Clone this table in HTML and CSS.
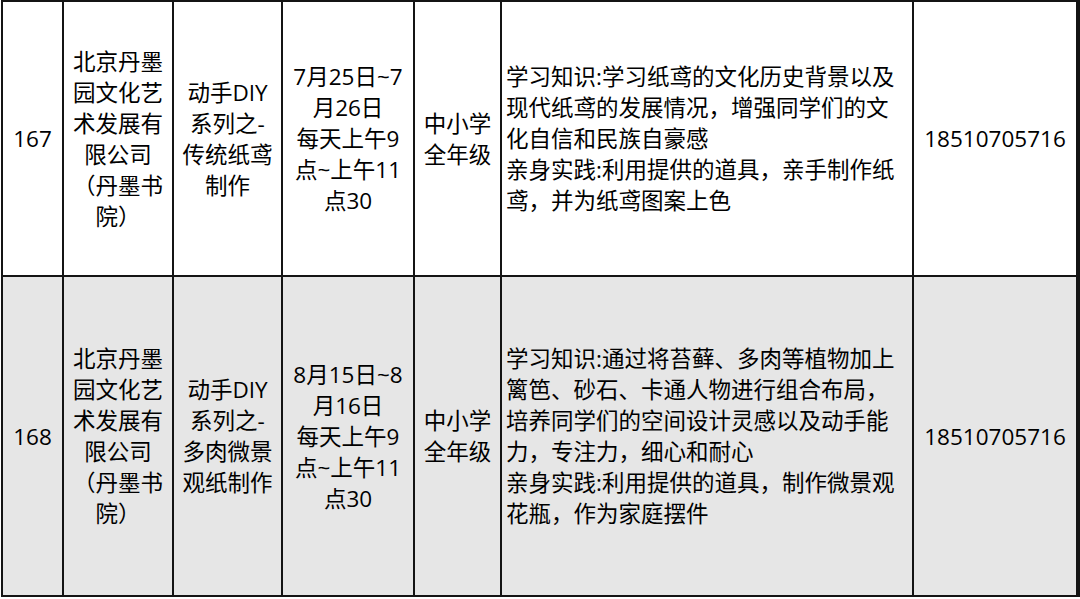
FILE: index.html
```html
<!DOCTYPE html>
<html lang="zh-CN">
<head>
<meta charset="utf-8">
<title>活动列表</title>
<link rel="stylesheet" href="styles.css">
</head>
<body>
<div class="table">
  <div class="row">
    <div class="cell c1">167</div>
    <div class="cell c2">北京丹墨<br>园文化艺<br>术发展有<br>限公司<br>（丹墨书<br>院）</div>
    <div class="cell c3">动手DIY<br>系列之-<br>传统纸鸢<br>制作</div>
    <div class="cell c4">7月25日~7<br>月26日<br>每天上午9<br>点~上午11<br>点30</div>
    <div class="cell c5">中小学<br>全年级</div>
    <div class="cell c6">学习知识:学习纸鸢的文化历史背景以及<br>现代纸鸢的发展情况，增强同学们的文<br>化自信和民族自豪感<br>亲身实践:利用提供的道具，亲手制作纸<br>鸢，并为纸鸢图案上色</div>
    <div class="cell c7">18510705716</div>
  </div>
  <div class="row alt">
    <div class="cell c1">168</div>
    <div class="cell c2">北京丹墨<br>园文化艺<br>术发展有<br>限公司<br>（丹墨书<br>院）</div>
    <div class="cell c3">动手DIY<br>系列之-<br>多肉微景<br>观纸制作</div>
    <div class="cell c4">8月15日~8<br>月16日<br>每天上午9<br>点~上午11<br>点30</div>
    <div class="cell c5">中小学<br>全年级</div>
    <div class="cell c6">学习知识:通过将苔藓、多肉等植物加上<br>篱笆、砂石、卡通人物进行组合布局，<br>培养同学们的空间设计灵感以及动手能<br>力，专注力，细心和耐心<br>亲身实践:利用提供的道具，制作微景观<br>花瓶，作为家庭摆件</div>
    <div class="cell c7">18510705716</div>
  </div>
</div>
</body>
</html>
```

FILE: styles.css
```css
html, body {
  margin: 0;
  padding: 0;
  background: #ffffff;
}

body {
  width: 1080px;
  height: 599px;
  overflow: hidden;
  font-family: "Open Sans", "Noto Sans CJK SC", sans-serif;
  font-size: 22.5px;
  line-height: 31px;
  color: #000000;
}

.table {
  margin-left: 1px;
  width: 1079px;
  border-top: 2px solid #141414;
  border-left: 2px solid #141414;
  box-sizing: border-box;
}

.row {
  display: grid;
  grid-template-columns: 61px 110px 109px 132px 87px 412px 166px;
  height: 275px;
  background: #ffffff;
}

.row.alt {
  height: 320px;
  background: #e6e6e6;
}

.cell {
  display: flex;
  align-items: center;
  justify-content: center;
  text-align: center;
  border-right: 2px solid #141414;
  border-bottom: 2px solid #141414;
  box-sizing: border-box;
  white-space: nowrap;
}

.c6 {
  justify-content: flex-start;
  text-align: left;
  padding-left: 4px;
}

.c7 {
  border-right-width: 4px;
}
```
